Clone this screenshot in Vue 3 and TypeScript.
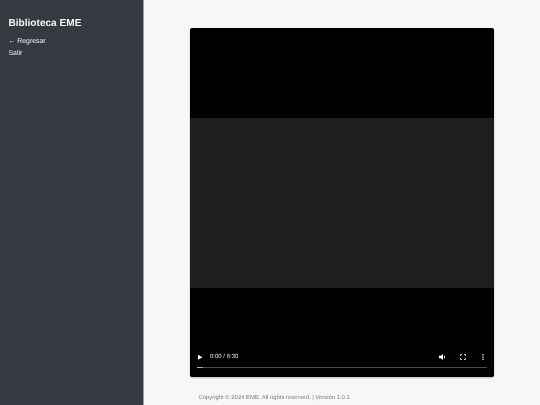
<script setup lang="ts">
const title = 'Biblioteca EME'
const links: string[] = ['← Regresar', 'Salir']
</script>

<template>
  <div class="layout">
    <aside class="sidebar">
      <h1 class="title">{{ title }}</h1>
      <nav class="nav">
        <a v-for="l in links" :key="l" class="link">{{ l }}</a>
      </nav>
    </aside>
    <main class="main">
      <div class="player">
        <div class="frame"></div>
        <div class="controls">
          <div class="row">
            <svg class="icon" width="12" height="12" viewBox="0 0 12 12"><path d="M4 3.7 L8.4 6.2 L4 8.7 Z" fill="#fff" /></svg>
            <span class="time">0:00 / 6:30</span>
            <span class="spacer"></span>
            <svg class="icon" width="12" height="12" viewBox="0 0 12 12"><path d="M2 4.7 H3.8 L6 3 V9 L3.8 7.3 H2 Z" fill="#fff" /><path d="M7 4.2 A2.2 2.2 0 0 1 7 7.8 Z" fill="#fff" /></svg>
            <svg class="icon gap" width="12" height="12" viewBox="0 0 12 12"><path d="M3.5 5 V3.5 H5 M7 3.5 H8.5 V5 M8.5 7 V8.5 H7 M5 8.5 H3.5 V7" fill="none" stroke="#ddd" stroke-width="0.9" /></svg>
            <svg class="icon gap" width="12" height="12" viewBox="0 0 12 12"><rect x="5.4" y="3" width="1.2" height="1.4" fill="#fff" /><rect x="5.4" y="5.3" width="1.2" height="1.4" fill="#fff" /><rect x="5.4" y="7.6" width="1.2" height="1.4" fill="#fff" /></svg>
          </div>
          <div class="track"><div class="thumb"></div></div>
        </div>
      </div>
      <footer class="footer">Copyright © 2024 EME. All rights reserved. | Versión 1.0.1</footer>
    </main>
  </div>
</template>

<style>
html, body { margin: 0; padding: 0; }
</style>

<style scoped>
.layout {
  display: flex;
  width: 540px;
  height: 405px;
  overflow: hidden;
  background: #f7f7f7;
  font-family: "Liberation Sans", Arial, sans-serif;
  text-rendering: geometricPrecision;
}
.sidebar {
  width: 144px;
  flex: none;
  box-sizing: border-box;
  padding: 17px 8.5px;
  background: #343a40;
  color: #fff;
  border-right: 1px solid #9a9da2;
}
.title {
  margin: 0;
  font-size: 10.1px;
  line-height: 14px;
  font-weight: 700;
  color: #f4f5f6;
  will-change: opacity;
}
.nav {
  display: flex;
  flex-direction: column;
  margin-top: 5px;
}
.link {
  font-size: 6.9px;
  line-height: 11.5px;
  color: #eceef0;
  will-change: opacity;
}
.main {
  flex: 1;
  display: flex;
  flex-direction: column;
  align-items: center;
  padding-top: 28px;
}
.player {
  position: relative;
  width: 304px;
  height: 349px;
  display: flex;
  align-items: center;
  background: #000;
  border-radius: 2px;
  box-shadow: 0 1px 2px rgba(0, 0, 0, 0.25);
}
.frame {
  width: 100%;
  height: 170px;
  margin-top: 1px;
  background: #1e1e1e;
}
.controls {
  position: absolute;
  left: 0;
  right: 0;
  bottom: 0;
  padding: 0 5px 9px 4px;
}
.row {
  display: flex;
  align-items: center;
  height: 12px;
}
.time {
  margin-left: 4px;
  padding-top: 1px;
  font-size: 6px;
  color: #e8e8e8;
  will-change: opacity;
}
.spacer { flex: 1; }
.gap { margin-left: 8px; }
.icon { flex: none; }
.track {
  height: 1.5px;
  margin: 4px 2px 0 3px;
  background: #4a4a4a;
}
.thumb {
  width: 6px;
  height: 1.5px;
  background: #aaa;
}
.footer {
  margin-top: 16.5px;
  width: 304px;
  box-sizing: border-box;
  padding-left: 8.5px;
  font-size: 5.9px;
  line-height: 8px;
  color: #767a80;
  white-space: nowrap;
  will-change: opacity;
}
</style>
